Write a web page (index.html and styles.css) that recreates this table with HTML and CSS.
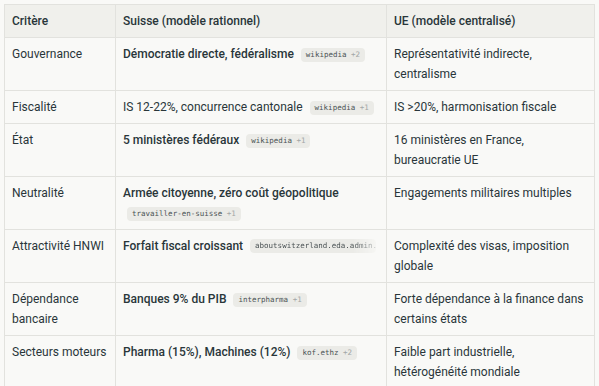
FILE: index.html
```html
<!DOCTYPE html>
<html lang="fr">
<head>
<meta charset="utf-8">
<link rel="stylesheet" href="styles.css">
</head>
<body>
<table class="cmp">
  <colgroup>
    <col class="c1"><col class="c2"><col class="c3">
  </colgroup>
  <thead>
    <tr><th>Critère</th><th>Suisse (modèle rationnel)</th><th>UE (modèle centralisé)</th></tr>
  </thead>
  <tbody>
    <tr>
      <td>Gouvernance</td>
      <td><strong>Démocratie directe, fédéralisme</strong> <span class="src">wikipedia <span class="more">+2</span></span></td>
      <td>Représentativité indirecte, centralisme</td>
    </tr>
    <tr>
      <td>Fiscalité</td>
      <td>IS 12-22%, concurrence cantonale <span class="src">wikipedia <span class="more">+1</span></span></td>
      <td>IS &gt;20%, harmonisation fiscale</td>
    </tr>
    <tr>
      <td>État</td>
      <td><strong>5 ministères fédéraux</strong> <span class="src">wikipedia <span class="more">+1</span></span></td>
      <td>16 ministères en France, bureaucratie UE</td>
    </tr>
    <tr>
      <td>Neutralité</td>
      <td><strong>Armée citoyenne, zéro coût géopolitique</strong> <span class="src">travailler-en-suisse <span class="more">+1</span></span></td>
      <td>Engagements militaires multiples</td>
    </tr>
    <tr>
      <td>Attractivité HNWI</td>
      <td><strong>Forfait fiscal croissant</strong> <span class="src fade">aboutswitzerland.eda.admin.ch</span></td>
      <td>Complexité des visas, imposition globale</td>
    </tr>
    <tr>
      <td>Dépendance bancaire</td>
      <td><strong>Banques 9% du PIB</strong> <span class="src">interpharma <span class="more">+1</span></span></td>
      <td>Forte dépendance à la finance dans certains états</td>
    </tr>
    <tr>
      <td>Secteurs moteurs</td>
      <td><strong>Pharma (15%), Machines (12%)</strong> <span class="src">kof.ethz <span class="more">+2</span></span></td>
      <td>Faible part industrielle, hétérogénéité mondiale</td>
    </tr>
  </tbody>
</table>
</body>
</html>
```
FILE: styles.css
```css
html, body {
  margin: 0;
  padding: 0;
  background: #f9f9f7;
}
body {
  padding: 4px;
  font-family: Roboto, "Liberation Sans", sans-serif;
  font-size: 12px;
  color: #29363a;
}
.cmp {
  border-collapse: collapse;
  width: 590px;
  table-layout: fixed;
  border: 1px solid #e2e2de;
}
.c1 { width: 111px; }
.c2 { width: 271px; }
.c3 { width: 208px; }
.cmp th, .cmp td {
  border: 1px solid #e2e2de;
  padding: 6px 7px;
  text-align: left;
  vertical-align: top;
  line-height: 20px;
}
.cmp th {
  background: #f0f0ec;
  font-weight: 500;
  height: 20px;
}
.cmp td strong {
  font-weight: 500;
}
.src {
  display: inline-block;
  vertical-align: 1px;
  font-family: "DejaVu Sans Mono", monospace;
  font-size: 7.5px;
  line-height: 14px;
  padding: 0 5px;
  border-radius: 4px;
  background: #ebebe7;
  color: #4a5254;
  margin-left: 4px;
  white-space: nowrap;
}
.more {
  color: #a2a6a6;
}
.src.fade {
  max-width: 116px;
  overflow: hidden;
  vertical-align: -3px;
  -webkit-mask-image: linear-gradient(to right, #000 82%, rgba(0,0,0,0.25) 100%);
  mask-image: linear-gradient(to right, #000 82%, rgba(0,0,0,0.25) 100%);
}
```
